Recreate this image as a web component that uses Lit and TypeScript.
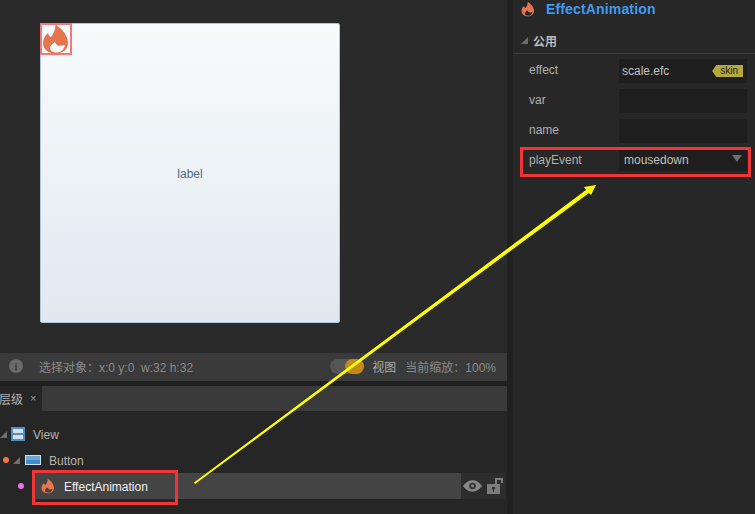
import { LitElement, css, html, svg } from 'lit'
import { customElement } from 'lit/decorators.js'

const flame = (size: number) => html`
  <svg width=${size} height=${size} viewBox="0 0 32 32">
    <path fill="#e5744f" fill-rule="evenodd" d="M15.5 1.5C21 5 28 12 28 20c0 6.500-5.500 10.500-12.500 10.500S3 26.500 3 20c0-4 2-7.500 5-10 .5 2 1.500 3.500 3 4 2.500-3 4.500-7.500 4.500-12.500zM15 18.500c-2 2.500-5 3.500-5 6.500 0 3 3 4.500 7 4.500s7-3 8-7.500c-7 2-9.500 0-10-3.500z"/>
  </svg>
`

const rows = [
  { name: 'effect', value: 'scale.efc', tag: 'skin' },
  { name: 'var', value: '' },
  { name: 'name', value: '' },
]

@customElement('app-root')
export class AppRoot extends LitElement {
  static styles = css`
    :host {
      display: block;
      position: relative;
      width: 755px;
      height: 514px;
      overflow: hidden;
      background: #1f1f1f;
      color: #b4b4b4;
      font-family: "Liberation Sans", "Noto Sans CJK SC", sans-serif;
      font-size: 12px;
    }
    .app { display: flex; height: 514px; }
    .left { width: 507px; display: flex; flex-direction: column; }
    .splitter { width: 6px; background: #202020; }
    .right { flex: 1; background: #272727; }

    .canvas { height: 353px; background: #2a2a2a; padding: 23px 0 0 40px; box-sizing: border-box; }
    .stage {
      position: relative;
      width: 300px;
      height: 300px;
      box-sizing: border-box;
      border: 1px solid #a9c9d9;
      border-radius: 2px;
      background: linear-gradient(#f8fbfc, #e0e9ef);
      display: flex;
      align-items: center;
      justify-content: center;
      padding-top: 1px;
      color: #4f6a7e;
    }
    .badge {
      position: absolute;
      left: -1px;
      top: -1px;
      width: 32px;
      height: 32px;
      box-sizing: border-box;
      border: 2px solid #f8757a;
      display: flex;
      align-items: center;
      justify-content: center;
    }
    .badge svg { flex: none; }

    .status {
      height: 28px;
      background: #3a3a3a;
      display: flex;
      align-items: center;
      box-sizing: border-box;
      padding: 0 11px 2px 9px;
      color: #8a8a8a;
    }
    .info {
      width: 14px;
      height: 14px;
      border-radius: 50%;
      background: #6a6a6a;
      color: #3a3a3a;
      font: bold 11px/14px "Liberation Serif", serif;
      text-align: center;
      margin-right: 16px;
    }
    .spacer { flex: 1; }
    .toggle { width: 34px; height: 15px; border-radius: 8px; background: #555; position: relative; margin-right: 8px; }
    .knob { position: absolute; right: 0; top: 0; width: 19px; height: 15px; border-radius: 8px; background: #c28a18; }
    .view { color: #a8a8a8; margin-right: 9px; }

    .tabs { margin-top: 5px; height: 25px; display: flex; background: #3a3a3a; }
    .tab { width: 43px; background: #262626; display: flex; align-items: center; color: #b4b4b4; margin-left: -1px; padding-bottom: 1px; box-sizing: border-box; }
    .tab span { margin-left: 7px; font-size: 11px; color: #999; }

    .tree { flex: 1; background: #262626; padding-top: 10px; }
    .node { height: 26px; display: flex; align-items: center; }
    .text { margin-top: 2px; }
    .tri {
      width: 0;
      height: 0;
      border-style: solid;
      border-width: 0 0 7px 7px;
      border-color: transparent transparent #6e6e6e transparent;
    }
    .dot { width: 6px; height: 6px; border-radius: 50%; }
    .view-icon {
      width: 14px;
      height: 14px;
      box-sizing: border-box;
      border: 2px solid #4a90c8;
      background: linear-gradient(#dedede 40%, #4a90c8 40%, #4a90c8 60%, #dedede 60%);
      margin: 0 8px 0 4px;
    }
    .btn-icon {
      width: 16px;
      height: 10px;
      box-sizing: border-box;
      border: 1px solid #cfe0ec;
      background: linear-gradient(#6ba6d8 50%, #3f8ccb 50%);
      margin: 0 8px 0 5px;
    }
    .selected { margin-left: 35px; width: 426px; height: 26px; background: #444; display: flex; align-items: center; padding-left: 5px; box-sizing: border-box; color: #f0f0f0; gap: 8px; }
    .actions { display: flex; align-items: center; gap: 5px; background: #2d2d2d; height: 26px; padding-left: 2px; width: 44px; box-sizing: border-box; }

    .title { height: 17px; display: flex; align-items: center; padding-left: 7px; gap: 10px; color: #3f9bf0; font-weight: bold; font-size: 14px; letter-spacing: .15px; }
    .group { margin-top: 14px; height: 23px; display: flex; align-items: center; gap: 5px; padding: 0 0 3px 8px; box-sizing: border-box; border-bottom: 1px solid #3c3c3c; color: #b8b8b8; font-weight: bold; }
    .props { padding: 5px 8px 0 16px; display: flex; flex-direction: column; gap: 6px; }
    .row { display: flex; height: 24px; }
    .label { width: 90px; line-height: 22px; color: #b0b0b0; }
    .box { flex: 1; background: #1e1e1e; display: flex; align-items: center; justify-content: space-between; padding: 0 4px 0 3px; color: #c0c0c0; }
    .tag {
      background: #b5a83c;
      color: #222;
      font-size: 10px;
      line-height: 12px;
      padding: 0 5px 0 8px;
      clip-path: polygon(4px 0, 100% 0, 100% 100%, 4px 100%, 0 50%);
    }
    .select { height: 22px; padding-left: 5px; }
    .arrow { width: 0; height: 0; border-style: solid; border-width: 7px 5px 0 5px; border-color: #6e6e6e transparent transparent transparent; margin: 0 1px 3px 0; }

    .mark { position: absolute; box-sizing: border-box; border: 3px solid #f23434; pointer-events: none; }
    .overlay { position: absolute; left: 0; top: 0; pointer-events: none; }
  `

  render() {
    return html`
      <div class="app">
        <div class="left">
          <div class="canvas">
            <div class="stage">label<div class="badge">${flame(32)}</div></div>
          </div>
          <div class="status">
            <div class="info">i</div>
            <div>选择对象：x:0 y:0&nbsp; w:32 h:32</div>
            <div class="spacer"></div>
            <div class="toggle"><div class="knob"></div></div>
            <div class="view">视图</div>
            <div>当前缩放：100%</div>
          </div>
          <div class="tabs"><div class="tab">层级<span>×</span></div></div>
          <div class="tree">
            <div class="node">
              <div class="tri"></div><div class="view-icon"></div><span class="text">View</span>
            </div>
            <div class="node">
              <div class="dot" style="background:#f4793b;margin:0 4px 0 3px"></div>
              <div class="tri"></div><div class="btn-icon"></div><span class="text">Button</span>
            </div>
            <div class="node">
              <div class="dot" style="background:#ee6fe8;position:absolute;left:18px"></div>
              <div class="selected">${flame(16)}<span class="text">EffectAnimation</span></div>
              <div class="actions">
                <svg width="19" height="12" viewBox="0 0 20 12"><path fill="#888" d="M0 6c3-4 6-6 10-6s7 2 10 6c-3 4-6 6-10 6S3 10 0 6z"/><circle cx="10" cy="6" r="3.500" fill="#333"/><circle cx="10" cy="6" r="1.500" fill="#888"/></svg>
                <svg width="17" height="16" viewBox="0 0 17 16"><path fill="#7c7c7c" d="M0 6h13v10H0z"/><path fill="none" stroke="#7c7c7c" stroke-width="2" d="M9 6V1h6v4"/><path fill="#333" d="M5 9h3v2.500H7V14H6v-2.500H5z"/></svg>
              </div>
            </div>
          </div>
        </div>
        <div class="splitter"></div>
        <div class="right">
          <div class="title">${flame(16)}<span>EffectAnimation</span></div>
          <div class="group"><div class="tri"></div>公用</div>
          <div class="props">
            ${rows.map(r => html`
              <div class="row">
                <div class="label">${r.name}</div>
                <div class="box"><span>${r.value}</span>${r.tag ? html`<span class="tag">${r.tag}</span>` : ''}</div>
              </div>
            `)}
            <div class="row">
              <div class="label">playEvent</div>
              <div class="box select"><span>mousedown</span><div class="arrow"></div></div>
            </div>
          </div>
        </div>
      </div>
      <div class="mark" style="left:520px;top:147px;width:231px;height:30px"></div>
      <div class="mark" style="left:32px;top:470px;width:146px;height:35px"></div>
      <svg class="overlay" width="755" height="514">
        ${svg`<polygon points="194,482.500 586,190 584,187 596,185 591,195 589,193 195,484" fill="#ffff00"/>`}
      </svg>
    `
  }
}
